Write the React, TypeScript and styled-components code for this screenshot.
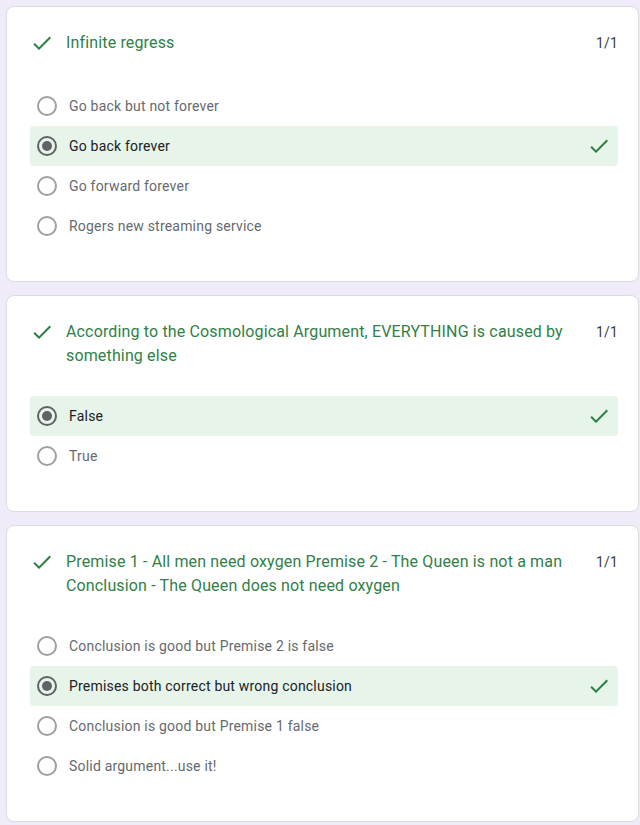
import React from "react";
import styled, { createGlobalStyle } from "styled-components";

const Global = createGlobalStyle`
  html, body { margin: 0; padding: 0; background: #f0ebf8; }
  body { font-family: Roboto, "Liberation Sans", sans-serif; }
`;

const Page = styled.div`
  display: flex;
  flex-direction: column;
  gap: 13px;
  padding: 6px 1px 4px 6px;
  background: #f0ebf8;
  min-height: 825px;
  box-sizing: border-box;
`;

const Card = styled.div`
  background: #fff;
  border: 1px solid #dadce0;
  border-radius: 8px;
  padding: 24px 20px 35px 23px;
`;

const Header = styled.div`
  display: flex;
  align-items: flex-start;
  min-height: 27px;
  margin-bottom: 28px;
`;

const HeaderIcon = styled.div`
  flex: 0 0 24px;
  height: 24px;
  margin-right: 12px;
  display: flex;
`;

const Title = styled.div`
  flex: 1;
  font-family: Roboto, "Liberation Sans", sans-serif;
  font-size: 16px;
  line-height: 24px;
  letter-spacing: 0.15px;
  color: #2f8146;
  margin-right: 30px;
`;

const Points = styled.div`
  font-size: 14px;
  line-height: 24px;
  letter-spacing: 0.2px;
  color: #3c4043;
  white-space: nowrap;
`;

const Options = styled.div`
  display: flex;
  flex-direction: column;
`;

const Row = styled.div<{ $correct?: boolean }>`
  display: flex;
  align-items: center;
  height: 40px;
  padding: 0 7px;
  border-radius: 4px;
  background: ${(p) => (p.$correct ? "#e6f4ea" : "transparent")};
`;

const Radio = styled.div<{ $checked?: boolean }>`
  width: 20px;
  height: 20px;
  box-sizing: border-box;
  border-radius: 50%;
  border: 2px solid ${(p) => (p.$checked ? "#5f6368" : "#9aa0a6")};
  display: flex;
  align-items: center;
  justify-content: center;
  flex: 0 0 20px;
  &::after {
    content: "";
    display: ${(p) => (p.$checked ? "block" : "none")};
    width: 10px;
    height: 10px;
    border-radius: 50%;
    background: #5f6368;
  }
`;

const Label = styled.div<{ $checked?: boolean }>`
  flex: 1;
  margin-left: 12px;
  font-size: 14px;
  letter-spacing: 0.2px;
  color: ${(p) => (p.$checked ? "#202124" : "#666a6e")};
`;

const RowIcon = styled.div`
  width: 24px;
  height: 24px;
  display: flex;
`;

const Check = () => (
  <svg width="24" height="24" viewBox="0 0 24 24" fill="#2a8040">
    <path d="M9 16.17L4.83 12l-1.42 1.41L9 19 21 7l-1.41-1.41z" />
  </svg>
);

type Q = { title: string; options: string[]; selected: number };

const questions: Q[] = [
  {
    title: "Infinite regress",
    options: [
      "Go back but not forever",
      "Go back forever",
      "Go forward forever",
      "Rogers new streaming service",
    ],
    selected: 1,
  },
  {
    title:
      "According to the Cosmological Argument, EVERYTHING is caused by something else",
    options: ["False", "True"],
    selected: 0,
  },
  {
    title:
      "Premise 1 - All men need oxygen Premise 2 - The Queen is not a man Conclusion - The Queen does not need oxygen",
    options: [
      "Conclusion is good but Premise 2 is false",
      "Premises both correct but wrong conclusion",
      "Conclusion is good but Premise 1 false",
      "Solid argument...use it!",
    ],
    selected: 1,
  },
];

export default function App() {
  return (
    <>
      <Global />
      <Page>
        {questions.map((q, i) => (
          <Card key={i}>
            <Header>
              <HeaderIcon>
                <Check />
              </HeaderIcon>
              <Title>{q.title}</Title>
              <Points>1/1</Points>
            </Header>
            <Options>
              {q.options.map((o, j) => {
                const sel = j === q.selected;
                return (
                  <Row key={j} $correct={sel}>
                    <Radio $checked={sel} />
                    <Label $checked={sel}>{o}</Label>
                    {sel && (
                      <RowIcon>
                        <Check />
                      </RowIcon>
                    )}
                  </Row>
                );
              })}
            </Options>
          </Card>
        ))}
      </Page>
    </>
  );
}
